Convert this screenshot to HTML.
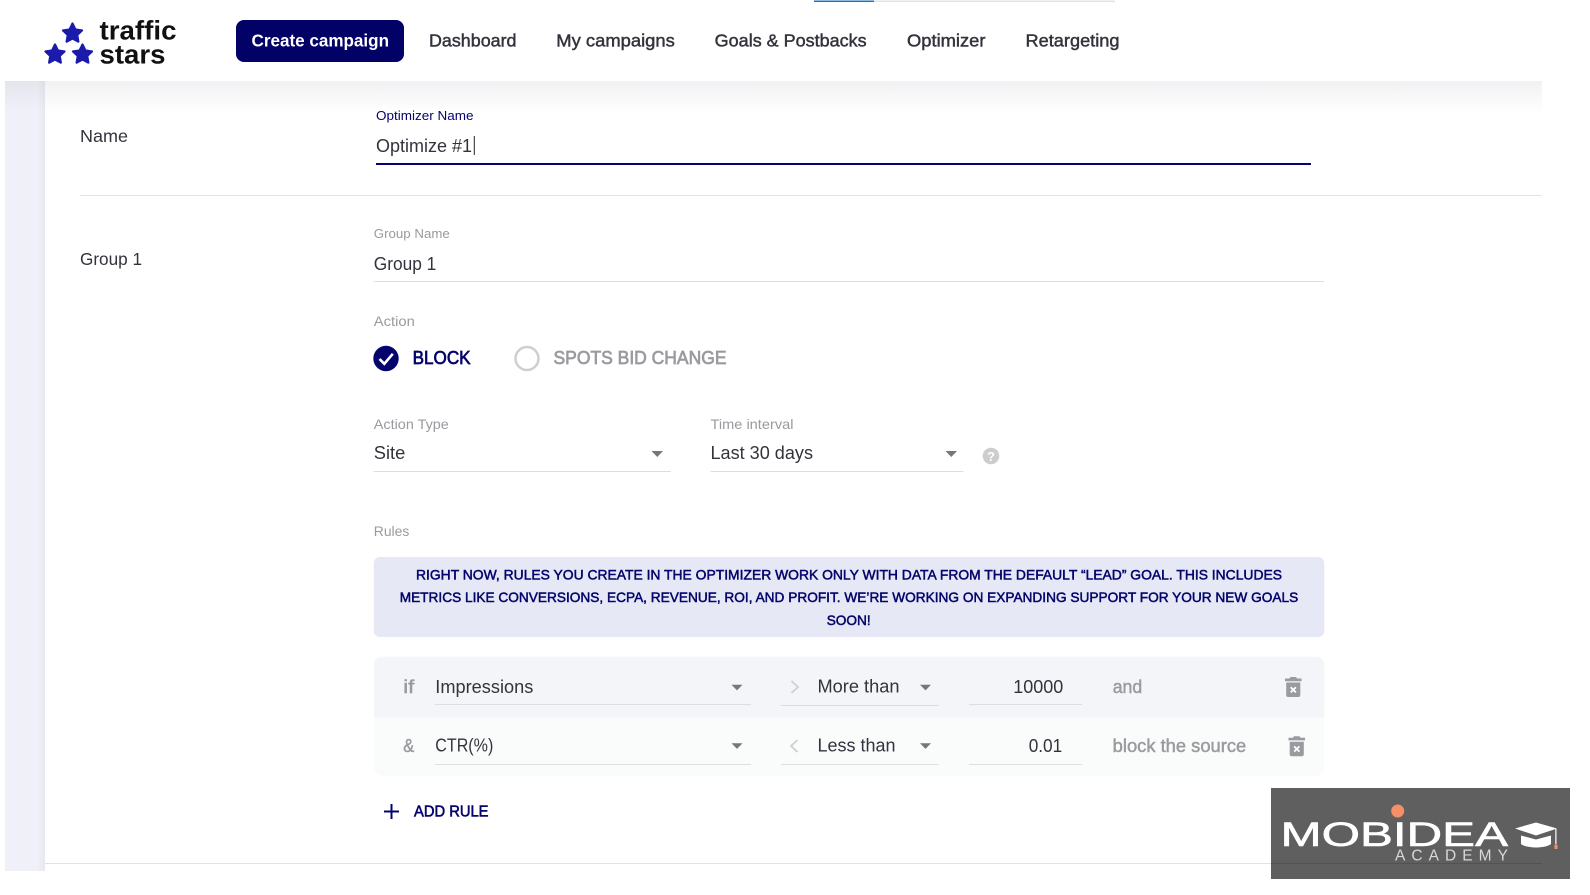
<!DOCTYPE html>
<html lang="en">
<head>
<meta charset="utf-8">
<title>Optimizer</title>
<style>
html,body{margin:0;padding:0;width:1590px;height:895px;background:#fff;overflow:hidden}
svg{display:block}
text{font-family:"Liberation Sans",sans-serif;fill:#33333d}
.m{stroke:#33333d;stroke-width:.45px}
.g{fill:#9a9a9f}
.gm{fill:#9a9a9f;stroke:#9a9a9f;stroke-width:.45px}
.n{fill:#04046c}
.nm{fill:#04046c;stroke:#04046c;stroke-width:.5px}
</style>
</head>
<body>
<svg width="1590" height="895" viewBox="0 0 1590 895" xmlns="http://www.w3.org/2000/svg">
<defs>
<linearGradient id="top" x1="0" y1="0" x2="0" y2="1"><stop offset="0" stop-color="#f1f1f3"/><stop offset="1" stop-color="#fff"/></linearGradient>
<linearGradient id="topb" x1="0" y1="0" x2="0" y2="1"><stop offset="0" stop-color="#000" stop-opacity=".045"/><stop offset="1" stop-color="#000" stop-opacity="0"/></linearGradient>
<linearGradient id="edge" x1="0" y1="0" x2="1" y2="0"><stop offset="0" stop-color="#eff0f8"/><stop offset="1" stop-color="#e6e7ef"/></linearGradient>
</defs>

<!-- top lines -->
<rect x="814" y="0.5" width="60" height="1.5" fill="#1a73c8"/>
<rect x="874" y="0.5" width="241" height="1.5" fill="#e3e3e3"/>

<!-- page backgrounds -->
<rect x="5" y="81" width="40" height="790" fill="#eff0f8"/>
<rect x="38" y="81" width="7" height="790" fill="url(#edge)"/>
<rect x="5" y="81" width="40" height="30" fill="url(#topb)"/>
<rect x="45" y="81" width="1497" height="32" fill="url(#top)"/>

<!-- logo -->
<g fill="#1a1aab" stroke="#1a1aab" stroke-linejoin="round">
<polygon transform="translate(72.5 33.5) scale(10)" stroke-width=".22" points="0,-1 .29,-.4 .951,-.309 .47,.15 .588,.809 0,.5 -.588,.809 -.47,.15 -.951,-.309 -.29,-.4"/>
<polygon transform="translate(55 54.5) scale(10)" stroke-width=".22" points="0,-1 .29,-.4 .951,-.309 .47,.15 .588,.809 0,.5 -.588,.809 -.47,.15 -.951,-.309 -.29,-.4"/>
<polygon transform="translate(82.5 54.5) scale(10)" stroke-width=".22" points="0,-1 .29,-.4 .951,-.309 .47,.15 .588,.809 0,.5 -.588,.809 -.47,.15 -.951,-.309 -.29,-.4"/>
</g>
<text x="99.500" y="39.300" font-size="27" font-weight="700" style="fill:#111" textLength="77" lengthAdjust="spacingAndGlyphs">traffic</text>
<text x="99.500" y="63.300" font-size="27" font-weight="700" style="fill:#111" textLength="66" lengthAdjust="spacingAndGlyphs">stars</text>

<!-- nav -->
<rect x="236" y="20" width="168" height="42" rx="8" fill="#020266"/>
<text x="251.5" y="46.7" font-size="17.5" font-weight="700" style="fill:#fff" textLength="137.5" lengthAdjust="spacingAndGlyphs">Create campaign</text>
<text class="m" x="429" y="46.7" font-size="17.5" textLength="87.5" lengthAdjust="spacingAndGlyphs">Dashboard</text>
<text class="m" x="556.300" y="46.7" font-size="17.5" textLength="118.5" lengthAdjust="spacingAndGlyphs">My campaigns</text>
<text class="m" x="714.700" y="46.7" font-size="17.5" textLength="152" lengthAdjust="spacingAndGlyphs">Goals &amp; Postbacks</text>
<text class="m" x="907" y="46.7" font-size="17.5" textLength="78.500" lengthAdjust="spacingAndGlyphs">Optimizer</text>
<text class="m" x="1025.500" y="46.7" font-size="17.5" textLength="94" lengthAdjust="spacingAndGlyphs">Retargeting</text>

<!-- name section -->
<text x="80" y="142" font-size="17.5" textLength="48" lengthAdjust="spacingAndGlyphs">Name</text>
<text class="n" x="376" y="120" font-size="13" textLength="97.500" lengthAdjust="spacingAndGlyphs">Optimizer Name</text>
<text x="376" y="152" font-size="18.5" textLength="96" lengthAdjust="spacingAndGlyphs">Optimize #1</text>
<rect x="473.800" y="136" width="1" height="19" fill="#222"/>
<rect x="376" y="163" width="935" height="2" fill="#04046c"/>
<rect x="80" y="195" width="1462" height="1" fill="#e2e2e2"/>

<!-- group -->
<text x="80" y="265" font-size="17.5" textLength="62" lengthAdjust="spacingAndGlyphs">Group 1</text>
<text class="g" x="373.8" y="238" font-size="13" textLength="76" lengthAdjust="spacingAndGlyphs">Group Name</text>
<text x="373.8" y="270" font-size="18" textLength="62.500" lengthAdjust="spacingAndGlyphs">Group 1</text>
<rect x="373.8" y="281" width="950.500" height="1" fill="#dedede"/>

<!-- action -->
<text class="g" x="373.8" y="326" font-size="14" textLength="41" lengthAdjust="spacingAndGlyphs">Action</text>
<circle cx="386" cy="358.5" r="12.7" fill="#04046c"/>
<path d="M379.5 359l4.8 4.8 8.5-10" fill="none" stroke="#fff" stroke-width="2.6"/>
<text class="nm" style="stroke-width:.7px" x="412.6" y="364" font-size="18" textLength="58" lengthAdjust="spacingAndGlyphs">BLOCK</text>
<circle cx="527" cy="358.5" r="11.5" fill="#fff" stroke="#cfcfcf" stroke-width="2.5"/>
<text class="gm" style="stroke-width:.7px" x="553.5" y="364" font-size="18" textLength="173" lengthAdjust="spacingAndGlyphs">SPOTS BID CHANGE</text>

<!-- selects -->
<text class="g" x="373.8" y="429" font-size="14" textLength="75" lengthAdjust="spacingAndGlyphs">Action Type</text>
<text class="g" x="710.5" y="429" font-size="14" textLength="83" lengthAdjust="spacingAndGlyphs">Time interval</text>
<text x="373.8" y="459" font-size="18" textLength="31.5" lengthAdjust="spacingAndGlyphs">Site</text>
<text x="710.5" y="459" font-size="18" textLength="102.5" lengthAdjust="spacingAndGlyphs">Last 30 days</text>
<path d="M651.5 451h11.5l-5.75 6z" fill="#777"/>
<path d="M945.5 451h11.5l-5.75 6z" fill="#777"/>
<rect x="373.8" y="471" width="297" height="1" fill="#dedede"/>
<rect x="710.5" y="471" width="253" height="1" fill="#dedede"/>
<circle cx="991" cy="456" r="8.3" fill="#cdcdcd"/>
<text x="991" y="461" font-size="13" font-weight="700" text-anchor="middle" style="fill:#fff">?</text>

<!-- rules -->
<text class="g" x="373.8" y="536" font-size="14" textLength="35.5" lengthAdjust="spacingAndGlyphs">Rules</text>
<rect x="373.8" y="557" width="950.500" height="80" rx="6" fill="#e6e8f5"/>
<text class="nm" x="416" y="579.500" font-size="14" textLength="866" lengthAdjust="spacingAndGlyphs">RIGHT NOW, RULES YOU CREATE IN THE OPTIMIZER WORK ONLY WITH DATA FROM THE DEFAULT “LEAD” GOAL. THIS INCLUDES</text>
<text class="nm" x="399.7" y="602" font-size="14" textLength="898.5" lengthAdjust="spacingAndGlyphs">METRICS LIKE CONVERSIONS, ECPA, REVENUE, ROI, AND PROFIT. WE’RE WORKING ON EXPANDING SUPPORT FOR YOUR NEW GOALS</text>
<text class="nm" x="826.7" y="625" font-size="14" textLength="44" lengthAdjust="spacingAndGlyphs">SOON!</text>

<!-- rule rows -->
<path d="M382 656.7h934.3a8 8 0 0 1 8 8v53H374v-53a8 8 0 0 1 8-8z" fill="#f4f5f8"/>
<path d="M374 717.7h950.3v50a8 8 0 0 1-8 8H382a8 8 0 0 1-8-8z" fill="#fafbfb"/>

<text class="gm" x="403.3" y="693" font-size="18" textLength="11" lengthAdjust="spacingAndGlyphs">if</text>
<text x="435.3" y="692.8" font-size="18.5" textLength="98" lengthAdjust="spacingAndGlyphs">Impressions</text>
<path d="M731.5 684.700h11l-5.5 5.7z" fill="#777"/>
<rect x="435" y="704" width="316" height="1" fill="#dedede"/>
<path d="M791.5 681l6.5 6-6.5 6" fill="none" stroke="#cfcfcf" stroke-width="1.8"/>
<text x="817.5" y="692.7" font-size="18" textLength="82" lengthAdjust="spacingAndGlyphs">More than</text>
<path d="M920 684.700h11l-5.5 5.7z" fill="#777"/>
<rect x="780.7" y="705" width="158" height="1" fill="#dedede"/>
<text x="1013.3" y="693" font-size="18.5" textLength="50" lengthAdjust="spacingAndGlyphs">10000</text>
<rect x="969" y="704" width="113" height="1" fill="#dedede"/>
<text class="gm" x="1112.7" y="693" font-size="18" textLength="29.5" lengthAdjust="spacingAndGlyphs">and</text>
<g transform="translate(1285 677)" fill="#9a9a9f">
<path d="M5.5 0h5.5l1 1.500h4.5V4.200H0V1.500h4.500z"/>
<path d="M1.200 5.500h14.100v12.500a2 2 0 0 1-2 2H3.200a2 2 0 0 1-2-2z"/>
<path d="M5.700 10.200l5.200 5.200M10.900 10.200l-5.200 5.200" stroke="#fff" stroke-width="1.800"/>
</g>

<text class="gm" x="403.3" y="752" font-size="18" textLength="11" lengthAdjust="spacingAndGlyphs">&amp;</text>
<text x="435.3" y="751.700" font-size="18.5" textLength="58" lengthAdjust="spacingAndGlyphs">CTR(%)</text>
<path d="M731.5 743.200h11l-5.5 5.7z" fill="#777"/>
<rect x="435" y="764" width="316" height="1" fill="#dedede"/>
<path d="M797.5 740l-6.5 6 6.5 6" fill="none" stroke="#cfcfcf" stroke-width="1.8"/>
<text x="817.5" y="751.500" font-size="18" textLength="78" lengthAdjust="spacingAndGlyphs">Less than</text>
<path d="M920 743.200h11l-5.5 5.7z" fill="#777"/>
<rect x="780.7" y="764" width="158" height="1" fill="#dedede"/>
<text x="1028.7" y="752" font-size="18.5" textLength="33.5" lengthAdjust="spacingAndGlyphs">0.01</text>
<rect x="969" y="764" width="113" height="1" fill="#dedede"/>
<text class="gm" x="1112.7" y="752" font-size="18" textLength="133.5" lengthAdjust="spacingAndGlyphs">block the source</text>
<g transform="translate(1288.5 736.2)" fill="#9a9a9f">
<path d="M5.5 0h5.5l1 1.500h4.5V4.200H0V1.500h4.500z"/>
<path d="M1.200 5.500h14.100v12.500a2 2 0 0 1-2 2H3.200a2 2 0 0 1-2-2z"/>
<path d="M5.700 10.200l5.200 5.200M10.900 10.200l-5.200 5.200" stroke="#fff" stroke-width="1.800"/>
</g>

<!-- add rule -->
<path d="M384 811.5h15M391.5 804v15" fill="none" stroke="#04046c" stroke-width="2"/>
<text class="nm" style="stroke-width:.6px" x="414" y="816.7" font-size="16" textLength="74.5" lengthAdjust="spacingAndGlyphs">ADD RULE</text>

<!-- bottom line -->
<rect x="45" y="863" width="1226" height="1" fill="#e2e2e2"/>

<!-- mobidea -->
<rect x="1271" y="788" width="299" height="91" fill="#5f5f5f"/>
<rect x="1271" y="863" width="271" height="1" fill="#525252"/>
<circle cx="1397.7" cy="811" r="6.5" fill="#f58f65"/>
<text x="1280.500" y="846" font-size="34" style="fill:#fff;stroke:#fff;stroke-width:.6px" textLength="227.500" lengthAdjust="spacingAndGlyphs">MOBIDEA</text>
<text x="1395" y="860.7" font-size="15.500" style="fill:#d8d8d8" textLength="113" lengthAdjust="spacing">ACADEMY</text>
<path d="M1515 828.500l21-6 21 6-21 7z" fill="#fff"/>
<path d="M1521 835.500l15 4 15-4v8.500c-3 2.500-10 3.500-15 3.500s-12-1-15-3.500z" fill="#fff"/>
<rect x="1555.300" y="829" width="1.200" height="15" fill="#fff"/>
<rect x="1554.500" y="844.500" width="3" height="4.500" fill="#f58f65"/>
</svg>
</body>
</html>
